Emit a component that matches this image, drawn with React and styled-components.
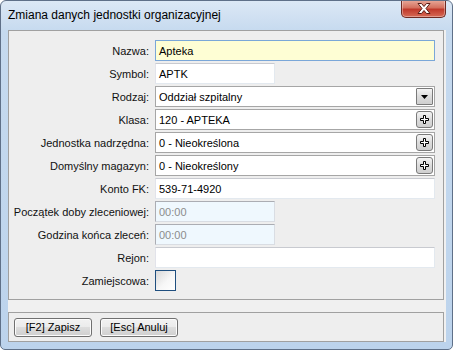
import { Fragment } from "react";
import styled, { createGlobalStyle } from "styled-components";

const GlobalStyle = createGlobalStyle`
  html, body {
    margin: 0;
    padding: 0;
  }
  body {
    width: 453px;
    height: 350px;
    overflow: hidden;
    font-family: "Liberation Sans", Arial, sans-serif;
    font-size: 11px;
    color: #000;
  }
`;

const Window = styled.div`
  width: 453px;
  height: 350px;
  box-sizing: border-box;
  border: 1px solid #5f7088;
  border-radius: 6px 6px 5px 5px;
  background: linear-gradient(#dce8f5, #c6daef 30px, #bcd3ec);
  display: flex;
  flex-direction: column;
  overflow: hidden;
`;

const TitleBar = styled.div`
  height: 29px;
  display: flex;
  justify-content: space-between;
  align-items: flex-start;
  padding-left: 7px;
`;

const Title = styled.span`
  font-size: 12px;
  line-height: 29px;
  color: #000;
`;

const CloseButton = styled.div`
  width: 45px;
  height: 18px;
  margin-right: 6px;
  margin-top: -1px;
  box-sizing: border-box;
  border: 1px solid #6e2a22;
  border-top: none;
  border-radius: 0 0 5px 5px;
  background: linear-gradient(#e9ab9c, #d4715f 45%, #c0392b 55%, #d66a55);
  display: flex;
  align-items: center;
  justify-content: center;
  box-shadow: inset 0 0 0 1px rgba(255, 255, 255, 0.35);
`;

const Client = styled.div`
  flex: 1;
  margin: 0 6px 7px 7px;
  padding-right: 2px;
  background: #f0f0f0;
  display: flex;
  flex-direction: column;
`;

const FormPanel = styled.div`
  height: 270px;
  box-sizing: border-box;
  border: 1px solid #a0a0a0;
  background: #eeeeee;
  padding: 9px 8px 0 4px;
  display: grid;
  grid-template-columns: 136px 1fr;
  grid-auto-rows: 21px;
  column-gap: 6px;
  row-gap: 2px;
  align-content: start;
`;

const Label = styled.label`
  text-align: right;
  align-self: center;
  white-space: nowrap;
  color: #111;
`;

const Box = styled.div`
  box-sizing: border-box;
  width: ${(p) => (p.$short ? "120px" : "100%")};
  height: 21px;
  border: 1px solid;
  border-color: ${(p) =>
    p.$kind === "focus"
      ? "#7aa7d8"
      : p.$kind === "combo"
      ? "#a6a6a6"
      : p.$kind === "time"
      ? "#abadb3 #d9dde3 #d9dde3 #abadb3"
      : "#c8cad0 #e3e9ef #e3e9ef #e2e3ea"};
  background: ${(p) =>
    p.$kind === "focus" ? "#fefed4" : p.$kind === "time" ? "#eff8fe" : "#ffffff"};
  color: ${(p) => (p.$kind === "time" ? "#8c8c8c" : "#000")};
  display: flex;
  align-items: center;
  justify-content: space-between;
  padding: 0 1px 0 3px;
`;

const SideButton = styled.div`
  width: 17px;
  height: 17px;
  box-sizing: border-box;
  border: 1px solid #7a7a7a;
  border-radius: ${(p) => (p.$square ? "1px" : "3px")};
  background: linear-gradient(#f4f4f4, #dcdcdc 50%, #cfcfcf);
  display: flex;
  align-items: center;
  justify-content: center;
`;

const Check = styled.div`
  width: 21px;
  height: 21px;
  box-sizing: border-box;
  border: 1px solid #1f4f7f;
  background: linear-gradient(135deg, #d8d8d8, #f7f7f7 55%, #ffffff);
`;

const Gap = styled.div`
  height: 12px;
`;

const ButtonPanel = styled.div`
  height: 30px;
  box-sizing: border-box;
  border: 1px solid #a0a0a0;
  background: #eeeeee;
  display: flex;
  align-items: center;
  gap: 8px;
  padding-left: 5px;
`;

const Button = styled.button`
  width: 78px;
  height: 19px;
  box-sizing: border-box;
  border: 1px solid #707070;
  border-radius: 3px;
  background: linear-gradient(#f2f2f2, #ebebeb 50%, #dddddd 50%, #cfcfcf);
  font-family: "Liberation Sans", Arial, sans-serif;
  font-size: 11px;
  color: #000;
  padding: 0;
  box-shadow: inset 0 0 0 1px #fcfcfc;
`;

const PlusIcon = () => (
  <svg width="9" height="9" viewBox="0 0 9 9">
    <polygon
      points="3.5,0.5 5.5,0.5 5.5,3.5 8.5,3.5 8.5,5.5 5.5,5.5 5.5,8.5 3.5,8.5 3.5,5.5 0.5,5.5 0.5,3.5 3.5,3.5"
      fill="#fff"
      stroke="#000"
      strokeWidth="1"
    />
  </svg>
);

const ArrowIcon = () => (
  <svg width="7" height="4" viewBox="0 0 7 4">
    <polygon points="0,0 7,0 3.5,4" fill="#000" />
  </svg>
);

const CloseIcon = () => (
  <svg width="14" height="11" viewBox="0 0 14 11">
    <polygon
      points="1,0.5 4.5,0.5 7,3.5 9.5,0.5 13,0.5 9,5.5 13,10.5 9.5,10.5 7,7.5 4.5,10.5 1,10.5 5,5.5"
      fill="#fff"
      stroke="#5a1d16"
      strokeWidth="1"
    />
  </svg>
);

const rows = [
  { label: "Nazwa:", value: "Apteka", kind: "focus" },
  { label: "Symbol:", value: "APTK", short: true },
  { label: "Rodzaj:", value: "Oddział szpitalny", kind: "combo", btn: "arrow" },
  { label: "Klasa:", value: "120 - APTEKA", kind: "combo", btn: "plus" },
  { label: "Jednostka nadrzędna:", value: "0 - Nieokreślona", kind: "combo", btn: "plus" },
  { label: "Domyślny magazyn:", value: "0 - Nieokreślony", kind: "combo", btn: "plus" },
  { label: "Konto FK:", value: "539-71-4920" },
  { label: "Początek doby zleceniowej:", value: "00:00", kind: "time", short: true },
  { label: "Godzina końca zleceń:", value: "00:00", kind: "time", short: true },
  { label: "Rejon:", value: "" },
];

export default function App() {
  return (
    <>
      <GlobalStyle />
      <Window>
        <TitleBar>
          <Title>Zmiana danych jednostki organizacyjnej</Title>
          <CloseButton>
            <CloseIcon />
          </CloseButton>
        </TitleBar>
        <Client>
          <FormPanel>
            {rows.map((r) => (
              <Fragment key={r.label}>
                <Label>{r.label}</Label>
                <Box $kind={r.kind} $short={r.short}>
                  <span>{r.value}</span>
                  {r.btn && (
                    <SideButton $square={r.btn === "arrow"}>
                      {r.btn === "arrow" ? <ArrowIcon /> : <PlusIcon />}
                    </SideButton>
                  )}
                </Box>
              </Fragment>
            ))}
            <Label>Zamiejscowa:</Label>
            <Check />
          </FormPanel>
          <Gap />
          <ButtonPanel>
            <Button>[F2] Zapisz</Button>
            <Button>[Esc] Anuluj</Button>
          </ButtonPanel>
        </Client>
      </Window>
    </>
  );
}
